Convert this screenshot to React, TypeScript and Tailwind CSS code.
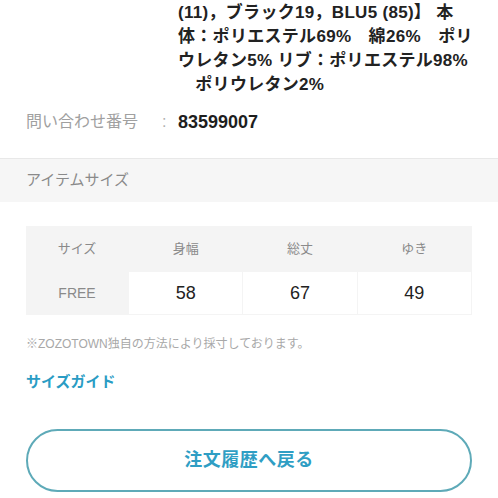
const sizes = [
  { label: "身幅", value: "58" },
  { label: "総丈", value: "67" },
  { label: "ゆき", value: "49" },
];

export default function App() {
  return (
    <div
      className="w-[498px] h-[498px] overflow-hidden bg-white text-[#222]"
      style={{ fontFamily: '"Liberation Sans", "Noto Sans CJK JP", sans-serif' }}
    >
      <div className="pl-[178px] pt-px text-[17px] leading-[24px] font-bold tracking-[0.3px]">
        <p>(11)，ブラック19，BLU5 (85)】 本</p>
        <p>体：ポリエステル69%　綿26%　ポリ</p>
        <p>ウレタン5% リブ：ポリエステル98%</p>
        <p>　ポリウレタン2%</p>
      </div>

      <div className="flex items-center mt-[13px] px-[26px] h-[24px] text-[16px]">
        <span className="w-[136px] text-[#a0a0a0]">問い合わせ番号</span>
        <span className="w-[16px] text-[#b0b0b0]">:</span>
        <span className="text-[#1e1e1e] text-[18px] font-semibold">83599007</span>
      </div>

      <div className="mt-[24px] border-t border-[#e8e8e8] bg-[#f6f6f6] h-[44px] flex items-center px-[26px]">
        <span className="text-[15px] text-[#8a8a8a]">アイテムサイズ</span>
      </div>

      <div className="mx-[26px] mt-[24px] bg-[#f4f4f4] grid grid-cols-[102px_1fr_1fr_1fr] gap-x-px pr-px pb-px">
        <div className="h-[46px] flex items-center justify-center text-[13px] text-[#8a8a8a]">サイズ</div>
        {sizes.map((s) => (
          <div key={s.label} className="h-[46px] flex items-center justify-center text-[13px] text-[#8a8a8a]">
            {s.label}
          </div>
        ))}
        <div className="h-[42px] flex items-center justify-center text-[14px] text-[#8a8a8a]">FREE</div>
        {sizes.map((s) => (
          <div key={s.value} className="h-[42px] bg-white flex items-center justify-center text-[18px] text-[#222]">
            {s.value}
          </div>
        ))}
      </div>

      <p className="mt-[20px] px-[26px] text-[12px] text-[#a8a8a8]">※ZOZOTOWN独自の方法により採寸しております。</p>

      <p className="mt-[18px] px-[26px] text-[15px] font-bold text-[#2a9cc4]">サイズガイド</p>

      <div className="px-[26px] mt-[35px]">
        <button className="w-full h-[63px] rounded-full border-2 border-[#5eaab8] bg-white text-[18px] font-bold text-[#2f9ec4] tracking-[0.5px]">
          注文履歴へ戻る
        </button>
      </div>
    </div>
  );
}
